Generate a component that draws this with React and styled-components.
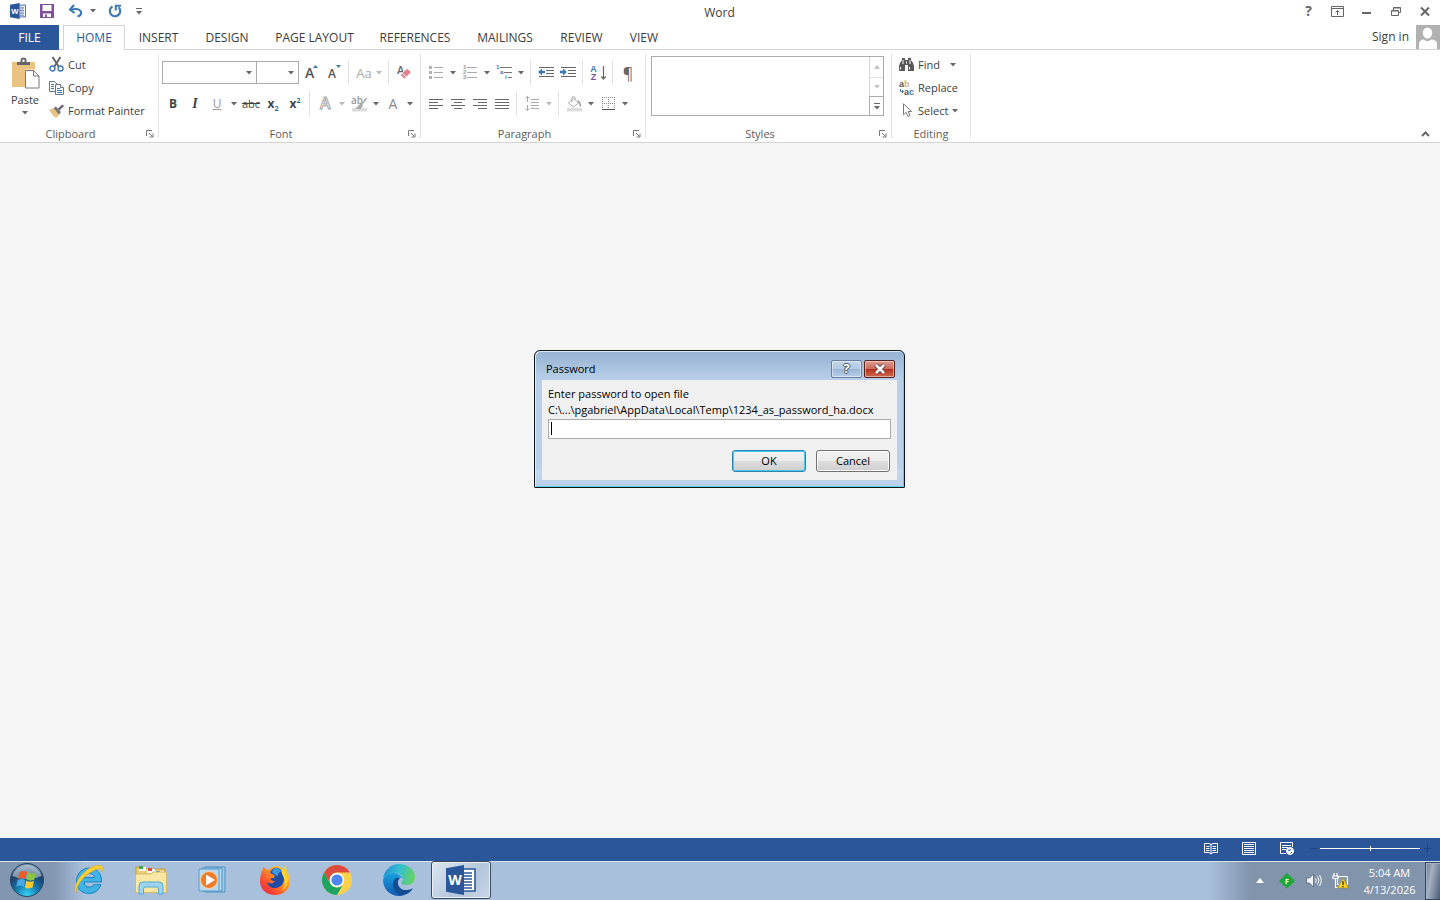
import React from "react";
import styled, { createGlobalStyle, css } from "styled-components";

const GlobalStyle = createGlobalStyle`
  * { box-sizing: border-box; }
  body {
    margin: 0;
    background: #f5f5f5;
    color: #3c3c3c;
    font-family: "Open Sans", "Noto Sans", sans-serif;
    font-size: 11px;
    line-height: 16px;
  }
  button, input, select { font: inherit; color: inherit; }
  svg { display: block; flex: none; overflow: visible; }
`;

const Screen = styled.div`
  position: relative;
  display: flex;
  flex-direction: column;
  min-height: 100vh;
`;

const Button = styled.button`
  display: flex;
  align-items: center;
  justify-content: center;
  padding: 0;
  border: 0;
  background: none;
`;

/* title bar */
const TitleBar = styled.header`
  display: grid;
  grid-template-columns: 1fr auto 1fr;
  align-items: center;
  height: 25px;
  padding-right: 1px;
  background: #fff;
`;
const QuickAccess = styled.div`
  display: flex;
  padding: 0 0 3px 3px;
`;
const WindowTools = styled.div`
  display: flex;
  justify-content: flex-end;
  padding-bottom: 3px;
`;
const BarButton = styled(Button)`
  width: ${(p) => p.$w || 29}px;
  height: 20px;
`;
const AppTitle = styled.h1`
  margin: 0;
  font-size: 12px;
  font-weight: 400;
`;

/* tabs */
const TabBar = styled.nav`
  display: flex;
  height: 25px;
  background: #fff;
  border-bottom: 1px solid #d4d4d4;
`;
const Tab = styled(Button)`
  width: ${(p) => p.$w}px;
  height: 25px;
  font-size: 12px;
  ${(p) =>
    p.$file &&
    css`
      background: #2b579a;
      color: #fff;
      margin-right: 4px;
    `}
  ${(p) =>
    p.$active &&
    css`
      background: #fff;
      color: #2b579a;
      border: 1px solid #d4d4d4;
      border-bottom: 0;
    `}
`;
const Account = styled.div`
  display: flex;
  align-items: center;
  gap: 7px;
  margin-left: auto;
`;
const SignIn = styled.a`
  color: #3c3c3c;
  font-size: 12px;
  text-decoration: none;
`;

/* ribbon */
const Ribbon = styled.div`
  display: flex;
  height: 93px;
  background: #fff;
  border-bottom: 1px solid #d4d4d4;
`;
const Group = styled.section`
  display: flex;
  flex-direction: column;
  width: ${(p) => p.$w}px;
  flex: none;
`;
const Divider = styled.div`
  width: 1px;
  margin: 4px 0;
  background: #e1e1e1;
`;
const GroupBody = styled.div`
  display: flex;
  height: 75px;
  padding: ${(p) => p.$pad || "3px 0 0"};
`;
const GroupFooter = styled.div`
  display: flex;
  align-items: center;
  height: 17px;
  color: #5c5c5c;
`;
const GroupLabel = styled.span`
  flex: 1;
  text-align: center;
`;
const Launcher = styled(Button)`
  width: 17px;
  height: 16px;
`;
const Stack = styled.div`
  display: flex;
  flex-direction: column;
  gap: ${(p) => p.$gap || 0}px;
`;
const Row = styled.div`
  display: flex;
  align-items: center;
  height: 23px;
`;
const PasteButton = styled(Button)`
  flex-direction: column;
  justify-content: flex-start;
  width: 49px;
  padding: 5px 0 0 1px;
  gap: 3px;
`;
const Command = styled(Button)`
  justify-content: flex-start;
  height: 23px;
  gap: 4px;
`;
const Tool = styled(Button)`
  width: ${(p) => p.$w || 22}px;
  height: 22px;
  gap: 4px;
`;
const Tail = styled(Button)`
  width: 12px;
  height: 22px;
`;
const Sep = styled.span`
  width: 1px;
  height: 25px;
  margin: 0 4px 0 3px;
  background: #e1e1e1;
`;
const Glyph = styled.span`
  font-family: "Open Sans", sans-serif;
  font-size: ${(p) => p.$size || 12}px;
  font-weight: ${(p) => (p.$bold ? 700 : 400)};
  color: ${(p) => p.$color || "#444"};
  text-decoration: ${(p) => p.$line || "none"};
  sub, sup {
    font-size: 7px;
    line-height: 0;
    color: #2f6ea8;
  }
`;
const ItalicGlyph = styled(Glyph)`
  font-family: "Liberation Serif", serif;
  font-style: italic;
`;
const ComboBox = styled.label`
  display: grid;
  width: ${(p) => p.$w}px;
  height: 23px;
  align-items: center;
  border: 1px solid #ababab;
  & + & { border-left: 0; }
  select, svg { grid-area: 1 / 1; }
  select {
    width: 100%;
    height: 21px;
    padding: 0 16px 0 4px;
    border: 0;
    background: #fff;
    appearance: none;
  }
  svg {
    justify-self: end;
    margin-right: 4px;
    pointer-events: none;
  }
`;
const Gallery = styled.div`
  display: flex;
  flex: 1;
  height: 60px;
  border: 1px solid #ababab;
`;
const GalleryList = styled.div`
  flex: 1;
`;
const GalleryScroll = styled.div`
  display: grid;
  grid-template-rows: 20px 19px 19px;
  width: 14px;
  border-left: 1px solid #d4d4d4;
  button + button { border-top: 1px solid #e1e1e1; }
  button:last-child {
    border-top: 1px solid #ababab;
    box-shadow: -1px 0 #ababab;
  }
`;
const CollapseRibbon = styled(Button)`
  align-self: flex-end;
  width: 29px;
  height: 17px;
  margin-left: auto;
`;

/* icons that carry letters */
const OutlineList = styled.span`
  display: flex;
  flex-direction: column;
  width: ${(p) => p.$w}px;
  font: 700 6px/5px "Liberation Sans", sans-serif;
  color: ${(p) => p.$color};
`;
const OutlineItem = styled.span`
  display: flex;
  align-items: center;
  gap: 1px;
  padding-left: ${(p) => p.$indent || 0}px;
  &::after {
    content: "";
    flex: 1;
    height: 1px;
    background: ${(p) => p.$rule};
  }
`;
const SortLetters = styled.span`
  display: flex;
  flex-direction: column;
  font: 700 9px/8px "Liberation Sans", sans-serif;
  color: #3e78b5;
  span + span { color: #80509f; }
`;
const ReplaceLetters = styled.span`
  display: flex;
  flex-direction: column;
  width: 15px;
  font: 700 9px/8px "Liberation Sans", sans-serif;
  color: #555;
  text-align: left;
`;
const ReplaceLine = styled.span`
  display: flex;
  align-items: center;
  justify-content: ${(p) => (p.$end ? "flex-end" : "flex-start")};
  em {
    font-style: normal;
    color: ${(p) => (p.$end ? "#3e78b5" : "#d0b48a")};
  }
`;
const HelpMark = styled.span`
  color: #fff;
  font: 700 13px/15px "Open Sans", sans-serif;
  text-shadow: 1px 0 #45556b, -1px 0 #45556b, 0 1px #45556b, 0 -1px #45556b;
`;

const Workspace = styled.main`
  flex: 1;
  background: #f5f5f5;
`;

/* password dialog */
const DialogLayer = styled.div`
  position: absolute;
  inset: 0 1px 62px 0;
  display: flex;
  align-items: center;
  justify-content: center;
  pointer-events: none;
`;
const Dialog = styled.form`
  width: 371px;
  padding: 0 7px 7px;
  border: 1px solid #10161c;
  border-radius: 6px 6px 1px 1px;
  background: linear-gradient(#94b2d1, #b9cfe9 29px, #b9d1ea 118px, #c3d8ee 119px, #b9d1ea);
  box-shadow: inset 1px 1px #dbe8f5, inset -1px -1px #5fd0ea;
  color: #000;
  pointer-events: auto;
`;
const DialogTitle = styled.div`
  display: flex;
  align-items: center;
  height: 29px;
  padding: 6px 2px 0 4px;
  gap: 2px;
  h2 {
    flex: 1;
    margin: 0;
    font-size: 11px;
    font-weight: 400;
  }
`;
const CaptionButton = styled(Button)`
  width: 31px;
  height: 18px;
  border: 1px solid ${(p) => (p.$close ? "#55201b" : "#6580a0")};
  border-radius: 2px;
  box-shadow: inset 0 0 0 1px rgba(255, 255, 255, 0.45);
  background: ${(p) =>
    p.$close
      ? "linear-gradient(#dd9c91, #cd6a5b 48%, #b3301d 50%, #cf6a50)"
      : "linear-gradient(#c3d6ea, #b3cae4 48%, #99b5d4 50%, #b6cee8)"};
`;
const DialogBody = styled.div`
  padding: 6px 6px 8px;
  background: #f0f0f0;
  label { display: block; }
`;
const Field = styled.div`
  position: relative;
  margin: 1px 0 11px;
  &::after {
    content: "";
    position: absolute;
    left: 3px;
    top: 3px;
    width: 1px;
    height: 13px;
    background: #000;
  }
  input {
    display: block;
    width: 100%;
    height: 20px;
    padding: 0 4px;
    border: 1px solid #ababab;
    background: #fff;
    outline: 0;
  }
`;
const Actions = styled.div`
  display: flex;
  justify-content: flex-end;
  gap: 10px;
  padding-right: 1px;
`;
const DialogButton = styled(Button)`
  width: 74px;
  height: 22px;
  border: 1px solid ${(p) => (p.$primary ? "#2c86b5" : "#707070")};
  border-radius: 3px;
  background: linear-gradient(#f2f2f2, #ebebeb 50%, #dddddd 50%, #cfcfcf);
  box-shadow: inset 0 0 0 1px ${(p) => (p.$primary ? "#48c6ee" : "#fcfcfc")};
`;

/* status bar and taskbar */
const StatusBar = styled.footer`
  display: flex;
  align-items: center;
  justify-content: flex-end;
  height: 23px;
  padding: 0 6px 2px 0;
  background: #2b579a;
`;
const StatusButton = styled(Button)`
  width: 38px;
  height: 20px;
`;
const ZoomStep = styled(Button)`
  width: 14px;
  height: 20px;
`;
const ZoomSlider = styled.input`
  width: 100px;
  height: 7px;
  margin: 0;
  appearance: none;
  background: linear-gradient(#fff, #fff) center / 100% 1px no-repeat;
  &::-webkit-slider-thumb {
    appearance: none;
    width: 1px;
    height: 5px;
    background: #fff;
  }
`;
const Taskbar = styled.footer`
  display: flex;
  height: 39px;
  background: linear-gradient(90deg, #8296b1, #8296b1 54px, #a9c0dd 84px, #a9c0dd calc(100% - 232px), #8194ac calc(100% - 190px), #8194ac);
  box-shadow: inset 0 1px #d3e4ea;
`;
const StartButton = styled(Button)`
  width: 54px;
  height: 38px;
  margin-right: 5px;
`;
const Apps = styled.div`
  display: flex;
  gap: 2px;
  height: 38px;
`;
const AppButton = styled(Button)`
  width: 60px;
  ${(p) =>
    p.$active &&
    css`
      border: 1px solid #3d4b5c;
      border-radius: 3px;
      background: linear-gradient(135deg, #dde6f0, #b4c6dc 60%, #c8d6e6);
      box-shadow: inset 0 0 0 1px #e8f0f8;
    `}
`;
const Tray = styled.div`
  display: flex;
  align-items: center;
  margin-left: auto;
`;
const TrayButton = styled(Button)`
  width: 27px;
  height: 38px;
`;
const Clock = styled.time`
  width: 71px;
  color: #fff;
  line-height: 17px;
  text-align: center;
`;
const ShowDesktop = styled(Button)`
  width: 15px;
  height: 38px;
  border: 1px solid #35465e;
  border-right: 0;
  background: linear-gradient(100deg, #66768d, #a5b1c1 35%, #6d7d94 75%, #4d5d75);
  box-shadow: inset 1px 1px #a3b0c1;
`;

const Caret = ({ color = "#666" }) => (
  <svg width="6" height="4" viewBox="0 0 6 4">
    <path d="M0 0h6L3 3.5z" fill={color} />
  </svg>
);

const WordLogo = ({ size = 16 }) => (
  <svg width={size} height={size} viewBox="0 0 30 30">
    <path d="M15 4h14v22H15z" fill="#fff" stroke="#2b579a" strokeWidth="1.6" />
    <path d="M18 8h8M18 11h8M18 14h8M18 17h8M18 20h8M18 23h8" stroke="#2b579a" strokeWidth="1.3" />
    <path d="M0 3.3L18 0v30L0 26.7z" fill="#2b579a" />
    <text x="9" y="20" textAnchor="middle" fontSize="14" fontFamily="Open Sans" fontWeight="700" fill="#fff">W</text>
  </svg>
);

const SaveIcon = () => (
  <svg width="14" height="14" viewBox="0 0 14 14">
    <path d="M0 0h14v14H0z" fill="#80509f" />
    <path d="M2.5 1h9v6h-9zM3 9.5h8V13H3z" fill="#fff" />
    <path d="M5 10.5h2V14H5z" fill="#80509f" />
  </svg>
);

const UndoIcon = () => (
  <svg width="15" height="14" viewBox="0 0 15 14" fill="none" stroke="#3e78b5" strokeWidth="2.2">
    <path d="M3 5.5c4-.8 9-1 10 2.5.5 2.500-1.500 4-3.500 4.500" />
    <path d="M6 1L2 5.5 6.500 9" />
  </svg>
);

const RedoIcon = () => (
  <svg width="14" height="14" viewBox="0 0 14 14" fill="none" stroke="#3e78b5" strokeWidth="2.2">
    <path d="M4.5 2.5A5.2 5.2 0 1 0 10.5 3.2" />
    <path d="M7.8 6.5V1.8H13" strokeWidth="2" />
  </svg>
);

const CustomizeIcon = () => (
  <svg width="6" height="7" viewBox="0 0 6 7">
    <path d="M0 0h6v1H0zM0 3h6L3 6.5z" fill="#666" />
  </svg>
);

const DisplayOptionsIcon = () => (
  <svg width="13" height="11" viewBox="0 0 13 11" fill="none" stroke="#666">
    <path d="M.5.5h12v10H.5zM.5 2.5h12M6.5 9V4.5M4.5 6.5l2-2 2 2" />
  </svg>
);

const RestoreIcon = () => (
  <svg width="10" height="9" viewBox="0 0 10 9" fill="none" stroke="#666">
    <path d="M.5 3.5h7v5h-7zM.5 4h7M2.5 3V.5h7v5H8M2.5 1h7" />
  </svg>
);

const CloseIcon = () => (
  <svg width="10" height="9" viewBox="0 0 10 9">
    <path d="M1 .5l8 8M9 .5l-8 8" stroke="#666" strokeWidth="2" />
  </svg>
);

const Avatar = () => (
  <svg width="24" height="24" viewBox="0 0 24 24">
    <path d="M0 0h24v24H0z" fill="#b1b1b1" />
    <ellipse cx="11.5" cy="8" rx="4.7" ry="5.6" fill="#fff" />
    <path d="M3 24v-5c0-3 2-4.5 5-4.5 2 2 5 2 7 0 4 0 6 1.5 6 4.5v5z" fill="#fff" />
  </svg>
);

const LauncherIcon = () => (
  <svg width="8" height="8" viewBox="0 0 8 8" fill="none" stroke="#777">
    <path d="M.5 6V.5H6M3 3l3.5 3.5M7 3.5V7H3.5" />
  </svg>
);

const PasteIcon = () => (
  <svg width="29" height="31" viewBox="0 0 29 31">
    <path d="M1 4h23v25H1z" fill="#eac282" />
    <path d="M6 7V4h3.5V2.5a3 3 0 0 1 6 0V4H19v3z" fill="#666" />
    <circle cx="12.5" cy="2.8" r="1.2" fill="#fff" />
    <path d="M14 11.5h9l5.5 5.5v13.5H14z" fill="#fff" />
    <path d="M14.5 12.5h8l5.5 5.5v12H14.5z" fill="#fff" stroke="#777" />
    <path d="M22.5 12.5V18H28" fill="none" stroke="#777" />
  </svg>
);

const CutIcon = () => (
  <svg width="15" height="15" viewBox="0 0 15 15" fill="none">
    <path d="M3.5 0L10 10M11.5 0L5 10" stroke="#666" strokeWidth="2" />
    <circle cx="3.5" cy="11.5" r="2.5" stroke="#3e78b5" strokeWidth="1.4" />
    <circle cx="11.5" cy="11.5" r="2.5" stroke="#3e78b5" strokeWidth="1.4" />
  </svg>
);

const CopyIcon = () => (
  <svg width="15" height="14" viewBox="0 0 15 14" fill="#fff" stroke="#6b7785">
    <path d="M.5.5h5l3 3v7h-8z" />
    <path d="M2 3.5h3M2 5.5h3M2 7.5h3" stroke="#3e78b5" />
    <path d="M6.5 3.5h5l3 3v7h-8z" />
    <path d="M11.5 3.5v3h3" />
    <path d="M8 7.5h3M8 9.5h5M8 11.5h5" stroke="#3e78b5" />
  </svg>
);

const PainterIcon = () => (
  <svg width="15" height="14" viewBox="0 0 15 14">
    <path d="M0 6l5-2 6 6-4 4-3-2.5z" fill="#eac282" />
    <path d="M4.5 4L7 2.5 12 8l-2 2.5z" fill="#777" />
    <path d="M9 4.5L13.5.5 15 2l-4.5 4.5z" fill="#666078" />
  </svg>
);

const SizeIcon = ({ up }) => (
  <svg width="14" height="16" viewBox="0 0 14 16">
    <text x="1" y="13" fontSize={up ? 14 : 12} fontFamily="Open Sans" fontWeight="600" fill="#555">A</text>
    <path d={up ? "M9 3h5l-2.5-3z" : "M9 0h5l-2.5 3z"} fill="#3e78b5" />
  </svg>
);

const EraserIcon = () => (
  <svg width="15" height="16" viewBox="0 0 15 16">
    <text x="0" y="9" fontSize="11" fontFamily="Open Sans" fontWeight="600" fill="#666">A</text>
    <path d="M3 10l7-6.5 4.5 3.5-7 7z" fill="#e0808f" stroke="#fff" strokeWidth=".8" />
    <path d="M5 8.2l4.5 4" stroke="#fff" />
  </svg>
);

const OutlineAIcon = () => (
  <svg width="14" height="15" viewBox="0 0 14 15">
    <text x="2" y="13" fontSize="16" fontFamily="Open Sans" fontWeight="600" fill="#fff" stroke="#a8a8a8">A</text>
  </svg>
);

const HighlightIcon = () => (
  <svg width="17" height="16" viewBox="0 0 17 16">
    <path d="M1 12h15v3.5H1z" fill="#dcdcdc" />
    <text x="0" y="8" fontSize="10" fontFamily="Open Sans" fontWeight="600" fill="#999">ab</text>
    <path d="M15.5 2L10 9.5M6 12l3.5-3.5L11 10l-2 2.5z" stroke="#aaa" strokeWidth="1.5" fill="#aaa" />
  </svg>
);

const BulletsIcon = () => (
  <svg width="15" height="15" viewBox="0 0 15 15">
    <path d="M5 2.5h9M5 7.5h9M5 12.5h9" stroke="#aaa" />
    <path d="M0 1h3v3H0zM0 6h3v3H0zM0 11h3v3H0z" fill="#b0b0b0" />
  </svg>
);

const NumbersIcon = () => (
  <OutlineList $w={14} $color="#999">
    <OutlineItem $rule="#aaa">1</OutlineItem>
    <OutlineItem $rule="#aaa">2</OutlineItem>
    <OutlineItem $rule="#aaa">3</OutlineItem>
  </OutlineList>
);

const MultilevelIcon = () => (
  <OutlineList $w={16} $color="#3e78b5">
    <OutlineItem $rule="#777">1</OutlineItem>
    <OutlineItem $rule="#777" $indent={4}>a</OutlineItem>
    <OutlineItem $rule="#777" $indent={9}>i</OutlineItem>
  </OutlineList>
);

const IndentIcon = ({ out }) => (
  <svg width="16" height="11" viewBox="0 0 16 11">
    <path d="M1 .5h15M8 3.5h8M8 6.5h8M1 9.5h15" stroke="#666" />
    <path d={out ? "M0 5l4-3.5v2.3h3v2.4H4v2.3z" : "M7 5L3 1.5v2.3H0v2.4h3v2.3z"} fill="#3e78b5" />
  </svg>
);

const SortIcon = () => (
  <>
    <SortLetters>
      <span>A</span>
      <span>Z</span>
    </SortLetters>
    <svg width="5" height="14" viewBox="0 0 5 14">
      <path d="M2.5 0v13M.3 10.5L2.5 13l2.2-2.5" fill="none" stroke="#666" strokeWidth="1.2" />
    </svg>
  </>
);

const alignments = {
  left: "M0 .5h14M0 3.5h9M0 6.5h14M0 9.5h9",
  center: "M0 .5h14M3 3.5h8M0 6.5h14M3 9.5h8",
  right: "M0 .5h14M5 3.5h9M0 6.5h14M5 9.5h9",
  justify: "M0 .5h14M0 3.5h14M0 6.5h14M0 9.5h14",
};

const AlignIcon = ({ side }) => (
  <svg width="14" height="10" viewBox="0 0 14 10">
    <path d={alignments[side]} stroke="#666" />
  </svg>
);

const SpacingIcon = () => (
  <svg width="15" height="15" viewBox="0 0 15 15" fill="none" stroke="#aaa">
    <path d="M6 3.5h8M6 6.5h8M6 9.5h8M6 12.5h8M2.5 0v6M2.5 9v6M.5 2.5l2-2 2 2M.5 12.5l2 2 2-2" />
  </svg>
);

const ShadingIcon = () => (
  <svg width="17" height="16" viewBox="0 0 17 16">
    <path d="M1 12h15v3.5H1z" fill="#dcdcdc" />
    <path d="M2.5 7l5-4.500 5 4.500-5 4z" fill="#fff" stroke="#aaa" />
    <path d="M6 6V2a1.5 1.5 0 0 1 3 0v2" fill="none" stroke="#aaa" />
    <path d="M11 4.5c3 0 4 2 4 6.500-1-.5-2-2-2-4z" fill="#999" />
  </svg>
);

const BordersIcon = () => (
  <svg width="13" height="13" viewBox="0 0 13 13">
    <path d="M.5 0v12M6.5 0v12M12.5 0v12M0 .5h13M0 6.5h13" stroke="#888" strokeDasharray="1 1" />
    <path d="M0 12.5h13" stroke="#555" />
  </svg>
);

const FindIcon = () => (
  <svg width="15" height="13" viewBox="0 0 15 13">
    <path d="M3 0h3v2h3V0h3v2l2 3 1 3v5H9V7H6v6H0V8l1-3 2-3z" fill="#595959" />
    <path d="M1.5 9v2.5M10.5 9v2.5M7.5 3.5v2M4 2v4M11 2v4" stroke="#fff" />
  </svg>
);

const ReplaceIcon = () => (
  <ReplaceLetters>
    <ReplaceLine>a<em>b</em></ReplaceLine>
    <ReplaceLine $end>
      <svg width="4" height="5" viewBox="0 0 4 5">
        <path d="M.5 0v2.500h3M2 1l1.500 1.500L2 4" fill="none" stroke="#3e78b5" />
      </svg>
      a<em>c</em>
    </ReplaceLine>
  </ReplaceLetters>
);

const SelectIcon = () => (
  <svg width="15" height="15" viewBox="0 0 15 15">
    <path d="M4.5.8v11l2.7-2.5 1.8 4.2 2-.8-1.8-4.2h3.500z" fill="#fff" stroke="#777" />
  </svg>
);

const ReadIcon = () => (
  <svg width="14" height="13" viewBox="0 0 14 13" fill="none" stroke="#fff">
    <path d="M.5 1.5H5l2 1 2-1h4.5v9H9l-2 1.5-2-1.5H.5zM7 2v10M2 4.5h3.5M2 6.5h3.5M2 8.5h3.5M8.5 4.5H12M8.5 6.5H12M8.5 8.5H12" />
  </svg>
);

const PrintIcon = () => (
  <svg width="14" height="13" viewBox="0 0 14 13" fill="none" stroke="#fff">
    <path d="M.5.5h13v12H.5zM2 2.5h10M2 4.5h10M2 6.5h10M2 8.5h10M2 10.5h10" />
  </svg>
);

const WebIcon = () => (
  <svg width="15" height="14" viewBox="0 0 15 14" fill="none" stroke="#fff">
    <path d="M6 11.5H.5V.5h12V5M2 3.5h9M2 5.5h6M2 7.5h4" />
    <circle cx="10" cy="9" r="3.5" fill="#fff" />
    <path d="M8 8l2 .5 1-1.500M10.5 11.5l1.500-1.500" stroke="#2b579a" />
  </svg>
);

const StartOrb = () => (
  <svg width="36" height="36" viewBox="0 0 36 36">
    <defs>
      <radialGradient id="orb" cx=".5" cy=".95" r=".9">
        <stop offset="0" stopColor="#35d5f5" />
        <stop offset=".4" stopColor="#1579ad" />
        <stop offset=".75" stopColor="#1b3f66" />
        <stop offset="1" stopColor="#6f8ca8" />
      </radialGradient>
    </defs>
    <circle cx="18" cy="18" r="16.5" fill="url(#orb)" stroke="#2c4763" />
    <path d="M3.5 14a15 15 0 0 1 29 0c-8 4-20 4-29 0z" fill="#e4eef6" opacity=".5" />
    <path d="M10.5 10c3-1.5 5-1.5 7.5 0l-1.5 7c-2.5-1.4-4.7-1.4-7.5-.2z" fill="#ee5a28" />
    <path d="M19 10.5c2.5 1.5 4.7 1.5 7.8.3l-1.6 7c-3 1-5 1-7.7-.5z" fill="#8cc63e" />
    <path d="M8.7 18c2.8-1.2 5-1.2 7.5.2l-1.5 6.6c-2.5-1.5-4.7-1.5-7.5-.3z" fill="#4ba7e5" />
    <path d="M17.3 18.6c2.5 1.5 4.7 1.5 7.7.4l-1.5 6.6c-3 1.2-5.2 1-7.7-.4z" fill="#fdc72e" />
  </svg>
);

const ExplorerE = () => (
  <svg width="32" height="32" viewBox="0 0 32 32">
    <path d="M28.5 18H11c.3 3 2.3 5 5.3 5 2 0 3.5-.8 4.3-2.3h7.2C26.2 26 22 29.5 16 29.5 8.5 29.5 3.5 24.5 3.5 17S9 4 16.5 4s12.5 6 12 14zM11 13.5h10.5c-.3-2.5-2.3-4-5-4s-4.8 1.5-5.5 4z" fill="#3fb3e6" stroke="#1683c0" />
    <path d="M3 29C-1 25 6 10 17 4c7-4 13-3.5 13 1 0 1-.3 2-.8 3 .2-4-3.7-4-9.2-1C10 12 3 22 3 29z" fill="#f8cf35" stroke="#dba51c" strokeWidth=".5" />
  </svg>
);

const FolderIcon = () => (
  <svg width="34" height="32" viewBox="0 0 34 32">
    <path d="M2 3h9l2 2h18v23H2z" fill="#e9cc74" stroke="#c49d49" />
    <path d="M5 3h7v4H5zM13 5h8v4h-8zM21 7h9v4h-9z" fill="#fff" />
    <path d="M5 2h4v3H5z" fill="#36a957" />
    <path d="M14 4h4v3h-4z" fill="#e14a3a" />
    <path d="M22 7h4v2h-4z" fill="#4096dc" />
    <path d="M1.5 10H17l2-2h13.5v20.5h-31z" fill="#f8e7a3" stroke="#d6b766" />
    <path d="M5 30v-8q0-4 4-4h16q4 0 4 4v8h-4.5v-5q0-2-2-2h-11q-2 0-2 2v5z" fill="#9bd5f1" stroke="#55a7d6" />
  </svg>
);

const MediaIcon = () => (
  <svg width="30" height="28" viewBox="0 0 30 28">
    <path d="M7 1h20v25H7z" fill="#9fcdec" stroke="#4b91c2" />
    <path d="M4 2h20v23H4z" fill="#b4dbf2" stroke="#4b91c2" />
    <path d="M1 3h20v22H1z" fill="#b8d9ee" stroke="#5a9bc8" />
    <circle cx="11" cy="14" r="8.5" fill="#f07c25" stroke="#fbd3a5" />
    <path d="M8 8.5v11l9-5.5z" fill="#fff" />
  </svg>
);

const FirefoxIcon = () => (
  <svg width="32" height="32" viewBox="0 0 32 32">
    <defs>
      <linearGradient id="fox" x1="1" y1="0" x2="0" y2="1">
        <stop offset="0" stopColor="#ffe93e" />
        <stop offset=".4" stopColor="#ff9620" />
        <stop offset=".75" stopColor="#fb4035" />
        <stop offset="1" stopColor="#e5204c" />
      </linearGradient>
    </defs>
    <path d="M3 7c1-1 1-2 1-4 2 1 3 2 4 3 3 0 5-4 9-4 4 0 5 2 8 4-.3-2 0-3 1-4 1 4 5 8 5 15 0 8-6 14-15 14S1 25 1 17c0-4 1-7 2-10z" fill="url(#fox)" />
    <path d="M11 9c1-4 5-6 8-5 3 1 5 4 6 8 1 7-3 12-9 12-4 0-7-2-8-6 3 2 6 2 8-1-3 0-5-1-4-3h3c2-2-1-4-4-5z" fill="#204ca3" />
    <path d="M13 8c1-3 3-5 6-4l4 4c-3-1-4 2-4 4l-3-1z" fill="#3b97e6" />
    <path d="M23 5c7 5 8 16 0 22 3-5 4-10 1-15-1-2-2-4-1-7z" fill="#ffd638" />
  </svg>
);

const ChromeIcon = () => (
  <svg width="30" height="30" viewBox="0 0 30 30">
    <circle cx="15" cy="15" r="15" fill="#fbd14b" />
    <path d="M2 7.5A15 15 0 0 1 28 7.5H15a7.5 7.5 0 0 0-6.5 11.2z" fill="#dc4b3e" />
    <path d="M2 7.5l6.5 11.2A7.5 7.5 0 0 0 21.5 18.7L15 30A15 15 0 0 1 2 7.5z" fill="#1ea362" />
    <circle cx="15" cy="15" r="7.3" fill="#fff" />
    <circle cx="15" cy="15" r="5.6" fill="#4b87ee" />
  </svg>
);

const EdgeIcon = () => (
  <svg width="32" height="32" viewBox="0 0 32 32">
    <defs>
      <linearGradient id="edgeTop" x1="0" y1=".3" x2="1" y2=".5">
        <stop offset="0" stopColor="#238fd2" />
        <stop offset=".5" stopColor="#35bfd0" />
        <stop offset="1" stopColor="#68d35b" />
      </linearGradient>
      <linearGradient id="edgeBody" x1="0" y1="0" x2="0" y2="1">
        <stop offset="0" stopColor="#1ba0de" />
        <stop offset="1" stopColor="#1159b0" />
      </linearGradient>
    </defs>
    <path d="M0 15C1 6 8 0 16 0c9 0 16 6 16 13 0 5-4 8-8 8-4 0-6-1-6-2 0-1 2-2 2-4 0-3-3-6-8-6C6 9 1 12 0 15z" fill="url(#edgeTop)" />
    <path d="M0 16c1-4 5-7 10-7 5 0 9 3 10 6-3-3-8-1-8 5 0 6 4 10 9 11-2 .7-3 1-5 1C7 32 0 25 0 16z" fill="url(#edgeBody)" />
    <path d="M12 15c-4 4-2 13 5 16 6 1 11-3 13-7-6 4-14 2-15-4-.3-2 0-4 2-6-2-.5-4 0-5 1z" fill="#124c92" />
  </svg>
);

const GreenBadge = () => (
  <svg width="18" height="18" viewBox="0 0 18 18">
    <path d="M9 1L17 9 9 16.5 1 9z" fill="#1ea83a" />
    <text x="7" y="12" fontSize="7" fontFamily="Open Sans" fontWeight="700" fill="#fff">F</text>
  </svg>
);

const SpeakerIcon = () => (
  <svg width="16" height="15" viewBox="0 0 16 15" fill="none" stroke="#fff">
    <path d="M.5 5h3L7.5 1v13l-4-4h-3z" fill="#f2f5f8" stroke="#4a5769" strokeWidth=".7" />
    <path d="M9.5 5.5q1.5 2 0 4M11.5 3.5q3 4 0 8M13.5 2q3.5 5.5 0 11" />
  </svg>
);

const NetworkIcon = () => (
  <svg width="16" height="16" viewBox="0 0 16 16">
    <path d="M4.5 3.5h10v8h-10z" fill="#8c9cb2" stroke="#fff" />
    <path d="M1 0v3M4 0v3M0 3h5v2.5H0zM2.5 5v9.5H6" fill="none" stroke="#fff" strokeWidth="1.2" />
    <path d="M10 5l5.5 10h-11z" fill="#fbd11f" stroke="#8c7418" strokeWidth=".5" />
    <path d="M10 8v4M10 13v1.3" stroke="#333" strokeWidth="1.3" />
  </svg>
);

const tabs = [
  { name: "FILE", width: 59, file: true },
  { name: "HOME", width: 62, active: true },
  { name: "INSERT", width: 67 },
  { name: "DESIGN", width: 70 },
  { name: "PAGE LAYOUT", width: 105 },
  { name: "REFERENCES", width: 96 },
  { name: "MAILINGS", width: 84 },
  { name: "REVIEW", width: 69 },
  { name: "VIEW", width: 56 },
];

const taskbarApps = [
  { name: "Internet Explorer", icon: <ExplorerE /> },
  { name: "Windows Explorer", icon: <FolderIcon /> },
  { name: "Media Player", icon: <MediaIcon /> },
  { name: "Firefox", icon: <FirefoxIcon /> },
  { name: "Chrome", icon: <ChromeIcon /> },
  { name: "Edge", icon: <EdgeIcon /> },
  { name: "Word", icon: <WordLogo size={30} />, active: true },
];

const DropTail = ({ label, color }) => (
  <Tail aria-label={label}>
    <Caret color={color} />
  </Tail>
);

const RibbonGroup = ({ title, width, pad, launcher = true, children }) => (
  <>
    <Group $w={width}>
      <GroupBody $pad={pad}>{children}</GroupBody>
      <GroupFooter>
        <GroupLabel>{title}</GroupLabel>
        {launcher && (
          <Launcher aria-label={`${title} settings`}>
            <LauncherIcon />
          </Launcher>
        )}
      </GroupFooter>
    </Group>
    <Divider />
  </>
);

function FontTools() {
  return (
    <Stack $gap={8}>
      <Row>
        <ComboBox $w={95}>
          <select aria-label="Font" />
          <Caret />
        </ComboBox>
        <ComboBox $w={42}>
          <select aria-label="Font size" />
          <Caret />
        </ComboBox>
        <Tool $w={24} aria-label="Grow font"><SizeIcon up /></Tool>
        <Tool aria-label="Shrink font"><SizeIcon /></Tool>
        <Sep />
        <Tool $w={32} aria-label="Change case">
          <Glyph $size={13} $color="#aaa">Aa</Glyph>
          <Caret color="#bbb" />
        </Tool>
        <Sep />
        <Tool aria-label="Clear formatting"><EraserIcon /></Tool>
      </Row>
      <Row>
        <Tool><Glyph $bold>B</Glyph></Tool>
        <Tool><ItalicGlyph $size={14} $bold>I</ItalicGlyph></Tool>
        <Tool><Glyph $color="#999" $line="underline">U</Glyph></Tool>
        <DropTail label="Underline style" />
        <Tool><Glyph $size={11} $line="line-through">abc</Glyph></Tool>
        <Tool><Glyph $bold>x<sub>2</sub></Glyph></Tool>
        <Tool><Glyph $bold>x<sup>2</sup></Glyph></Tool>
        <Sep />
        <Tool aria-label="Text effects"><OutlineAIcon /></Tool>
        <DropTail label="Text effects menu" color="#bbb" />
        <Tool aria-label="Highlight"><HighlightIcon /></Tool>
        <DropTail label="Highlight colour" />
        <Tool><Glyph $size={14} $color="#888">A</Glyph></Tool>
        <DropTail label="Font colour" />
      </Row>
    </Stack>
  );
}

function ParagraphTools() {
  return (
    <Stack $gap={8}>
      <Row>
        <Tool aria-label="Bullets"><BulletsIcon /></Tool>
        <DropTail label="Bullet style" />
        <Tool aria-label="Numbering"><NumbersIcon /></Tool>
        <DropTail label="Number style" />
        <Tool aria-label="Multilevel list"><MultilevelIcon /></Tool>
        <DropTail label="Multilevel style" />
        <Sep />
        <Tool aria-label="Decrease indent"><IndentIcon out /></Tool>
        <Tool aria-label="Increase indent"><IndentIcon /></Tool>
        <Sep />
        <Tool aria-label="Sort"><SortIcon /></Tool>
        <Sep />
        <Tool aria-label="Show marks"><Glyph $size={16} $color="#666">¶</Glyph></Tool>
      </Row>
      <Row>
        {Object.keys(alignments).map((side) => (
          <Tool key={side} aria-label={`Align ${side}`}>
            <AlignIcon side={side} />
          </Tool>
        ))}
        <Sep />
        <Tool aria-label="Line spacing"><SpacingIcon /></Tool>
        <DropTail label="Line spacing menu" color="#bbb" />
        <Sep />
        <Tool aria-label="Shading"><ShadingIcon /></Tool>
        <DropTail label="Shading colour" />
        <Tool aria-label="Borders"><BordersIcon /></Tool>
        <DropTail label="Border style" />
      </Row>
    </Stack>
  );
}

function PasswordDialog() {
  return (
    <DialogLayer>
      <Dialog role="dialog" aria-labelledby="dialog-title" onSubmit={(e) => e.preventDefault()}>
        <DialogTitle>
          <h2 id="dialog-title">Password</h2>
          <CaptionButton type="button" aria-label="Help">
            <HelpMark>?</HelpMark>
          </CaptionButton>
          <CaptionButton type="button" $close aria-label="Close">
            <svg width="12" height="10" viewBox="0 0 12 10">
              <path d="M2 1l8 8M10 1L2 9" stroke="#5c2f35" strokeWidth="4.4" />
              <path d="M2 1l8 8M10 1L2 9" stroke="#fff" strokeWidth="2.6" />
            </svg>
          </CaptionButton>
        </DialogTitle>
        <DialogBody>
          <label htmlFor="password">
            Enter password to open file
            <br />
            C:\...\pgabriel\AppData\Local\Temp\1234_as_password_ha.docx
          </label>
          <Field>
            <input id="password" type="password" />
          </Field>
          <Actions>
            <DialogButton type="submit" $primary>OK</DialogButton>
            <DialogButton type="button">Cancel</DialogButton>
          </Actions>
        </DialogBody>
      </Dialog>
    </DialogLayer>
  );
}

function App() {
  return (
    <Screen>
      <GlobalStyle />
      <TitleBar>
        <QuickAccess>
          <BarButton aria-label="Word"><WordLogo /></BarButton>
          <BarButton aria-label="Save"><SaveIcon /></BarButton>
          <BarButton $w={28} aria-label="Undo"><UndoIcon /></BarButton>
          <BarButton $w={8} aria-label="Undo history"><Caret /></BarButton>
          <BarButton $w={36} aria-label="Redo"><RedoIcon /></BarButton>
          <BarButton $w={12} aria-label="Customize toolbar"><CustomizeIcon /></BarButton>
        </QuickAccess>
        <AppTitle>Word</AppTitle>
        <WindowTools>
          <BarButton><Glyph $size={14} $bold $color="#666">?</Glyph></BarButton>
          <BarButton aria-label="Ribbon display options"><DisplayOptionsIcon /></BarButton>
          <BarButton aria-label="Minimize">
            <svg width="9" height="8" viewBox="0 0 9 8"><path d="M0 5h9v2H0z" fill="#666" /></svg>
          </BarButton>
          <BarButton aria-label="Restore"><RestoreIcon /></BarButton>
          <BarButton aria-label="Close"><CloseIcon /></BarButton>
        </WindowTools>
      </TitleBar>

      <TabBar>
        {tabs.map((tab) => (
          <Tab key={tab.name} $w={tab.width} $file={tab.file} $active={tab.active}>
            {tab.name}
          </Tab>
        ))}
        <Account>
          <SignIn href="#signin">Sign in</SignIn>
          <Avatar />
        </Account>
      </TabBar>

      <Ribbon>
        <RibbonGroup title="Clipboard" width={158}>
          <PasteButton>
            <PasteIcon />
            Paste
            <Caret />
          </PasteButton>
          <Stack>
            <Command><CutIcon />Cut</Command>
            <Command><CopyIcon />Copy</Command>
            <Command><PainterIcon />Format Painter</Command>
          </Stack>
        </RibbonGroup>
        <RibbonGroup title="Font" width={261} pad="11px 0 0 3px">
          <FontTools />
        </RibbonGroup>
        <RibbonGroup title="Paragraph" width={224} pad="11px 0 0 4px">
          <ParagraphTools />
        </RibbonGroup>
        <RibbonGroup title="Styles" width={245} pad="6px 7px 0 5px">
          <Gallery>
            <GalleryList />
            <GalleryScroll>
              <Button aria-label="Row up">
                <svg width="6" height="4" viewBox="0 0 6 4"><path d="M0 4h6L3 0z" fill="#c4c4c4" /></svg>
              </Button>
              <Button aria-label="Row down"><Caret color="#c4c4c4" /></Button>
              <Button aria-label="More styles"><CustomizeIcon /></Button>
            </GalleryScroll>
          </Gallery>
        </RibbonGroup>
        <RibbonGroup title="Editing" width={78} pad="3px 0 0 7px" launcher={false}>
          <Stack>
            <Command><FindIcon />Find&nbsp;&nbsp;<Caret /></Command>
            <Command><ReplaceIcon />Replace</Command>
            <Command><SelectIcon />Select<Caret /></Command>
          </Stack>
        </RibbonGroup>
        <CollapseRibbon aria-label="Collapse ribbon">
          <svg width="9" height="6" viewBox="0 0 9 6"><path d="M1 5l3.5-3.5L8 5" fill="none" stroke="#666" strokeWidth="2" /></svg>
        </CollapseRibbon>
      </Ribbon>

      <Workspace />

      <StatusBar>
        <StatusButton aria-label="Read mode"><ReadIcon /></StatusButton>
        <StatusButton aria-label="Print layout"><PrintIcon /></StatusButton>
        <StatusButton aria-label="Web layout"><WebIcon /></StatusButton>
        <ZoomStep aria-label="Zoom out">
          <svg width="7" height="7" viewBox="0 0 7 7"><path d="M0 3.5h7" stroke="#1e4484" /></svg>
        </ZoomStep>
        <ZoomSlider type="range" aria-label="Zoom" defaultValue="50" />
        <ZoomStep aria-label="Zoom in">
          <svg width="7" height="7" viewBox="0 0 7 7"><path d="M0 3.5h7M3.5 0v7" stroke="#1e4484" /></svg>
        </ZoomStep>
      </StatusBar>

      <Taskbar>
        <StartButton aria-label="Start"><StartOrb /></StartButton>
        <Apps>
          {taskbarApps.map((app) => (
            <AppButton key={app.name} aria-label={app.name} $active={app.active}>
              {app.icon}
            </AppButton>
          ))}
        </Apps>
        <Tray>
          <TrayButton aria-label="Show hidden icons">
            <svg width="8" height="5" viewBox="0 0 8 5"><path d="M0 5h8L4 0z" fill="#fff" /></svg>
          </TrayButton>
          <TrayButton aria-label="Security"><GreenBadge /></TrayButton>
          <TrayButton aria-label="Volume"><SpeakerIcon /></TrayButton>
          <TrayButton aria-label="Network"><NetworkIcon /></TrayButton>
          <Clock>
            5:04 AM
            <br />
            4/13/2026
          </Clock>
          <ShowDesktop aria-label="Show desktop" />
        </Tray>
      </Taskbar>

      <PasswordDialog />
    </Screen>
  );
}

export default App;
